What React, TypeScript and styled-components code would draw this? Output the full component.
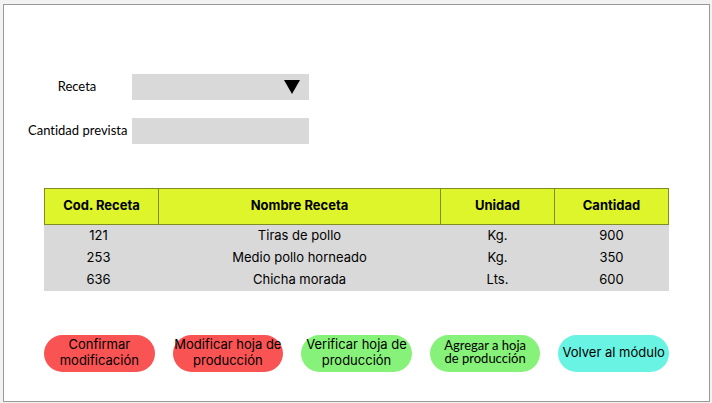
import React from 'react';
import styled, { createGlobalStyle } from 'styled-components';

const GlobalStyle = createGlobalStyle`
  * { box-sizing: border-box; }
  body {
    margin: 0;
    background: #f2f2f2;
    color: #000;
    font-family: Inter, "Liberation Sans", sans-serif;
    font-variant-ligatures: no-common-ligatures;
  }
`;

const Page = styled.div`
  display: flex;
  min-height: 100vh;
  padding: 4px 2px 1px 3px;
`;

const Panel = styled.main`
  flex: 1;
  min-width: 0;
  padding: 69px 40px 24px;
  background: #fff;
  border: 1px solid #999;
`;

const Form = styled.form`
  display: grid;
  grid-template-columns: 98px minmax(0, 177px);
  gap: 18px 6px;
  align-items: center;
  margin-left: -16px;
`;

const Label = styled.label`
  padding-bottom: 2px;
  font: 400 13px/24px Lato, sans-serif;
  font-variant-ligatures: no-common-ligatures;
  text-align: center;
  white-space: nowrap;
`;

const SelectBox = styled.div`
  display: grid;
  align-items: center;

  > * { grid-area: 1 / 1; }
`;

const Select = styled.select`
  appearance: none;
  width: 100%;
  height: 26px;
  padding: 0 32px 0 8px;
  border: 0;
  border-radius: 0;
  background: #d9d9d9;
  font: 400 13px/16px Inter, sans-serif;
`;

const Arrow = styled.svg`
  justify-self: end;
  width: 16px;
  height: 14px;
  margin-right: 9px;
  pointer-events: none;
`;

const Input = styled.input`
  width: 100%;
  height: 26px;
  padding: 0 8px;
  border: 0;
  background: #d9d9d9;
  font: 400 13px/16px Inter, sans-serif;
`;

const Table = styled.table`
  width: 100%;
  margin-top: 44px;
  table-layout: fixed;
  border-collapse: collapse;
  background: #d9d9d9;
`;

const HeadCell = styled.th<{ $wide?: boolean }>`
  width: ${({ $wide }) => ($wide ? 'auto' : '114px')};
  height: 36px;
  padding: 0 0 3px;
  border: 1px solid #7f8c1f;
  background: #ddf52a;
  font-size: 13px;
  line-height: 16px;
  font-weight: 700;
`;

const Cell = styled.td`
  height: 22px;
  padding: 0 0 2px;
  font-size: 13px;
  line-height: 20px;
  text-align: center;

  &:first-child { padding-right: 6px; }
`;

const Actions = styled.div`
  display: grid;
  grid-template-columns: repeat(5, minmax(0, 1fr));
  gap: 18px;
  margin-top: 44px;
`;

const tones = { red: '#f95353', green: '#87f279', cyan: '#69f3e2' };

const Action = styled.button<{ $tone: keyof typeof tones; $compact?: boolean }>`
  display: flex;
  align-items: center;
  justify-content: center;
  height: 37px;
  padding: 0 0 4px;
  border: 0;
  border-radius: 19px;
  background: ${({ $tone }) => tones[$tone]};
  color: #000;
  font-family: ${({ $compact }) => ($compact ? 'Lato' : 'Inter')}, sans-serif;
  font-size: 13px;
  line-height: ${({ $compact }) => ($compact ? '13px' : '16px')};
  text-align: center;
  white-space: nowrap;
`;

const recipes = [
  ['121', 'Tiras de pollo', 'Kg.', '900'],
  ['253', 'Medio pollo horneado', 'Kg.', '350'],
  ['636', 'Chicha morada', 'Lts.', '600'],
];

export default function App() {
  return (
    <Page>
      <GlobalStyle />
      <Panel>
        <Form>
          <Label htmlFor="receta">Receta</Label>
          <SelectBox>
            <Select id="receta" defaultValue="">
              <option value="" />
              {recipes.map(([code, name]) => (
                <option key={code} value={code}>{name}</option>
              ))}
            </Select>
            <Arrow viewBox="0 0 16 14" aria-hidden="true">
              <path d="M0 0H16L8 14Z" />
            </Arrow>
          </SelectBox>
          <Label htmlFor="cantidad">Cantidad prevista</Label>
          <Input id="cantidad" type="text" />
        </Form>
        <Table>
          <thead>
            <tr>
              <HeadCell scope="col">Cod. Receta</HeadCell>
              <HeadCell scope="col" $wide>Nombre Receta</HeadCell>
              <HeadCell scope="col">Unidad</HeadCell>
              <HeadCell scope="col">Cantidad</HeadCell>
            </tr>
          </thead>
          <tbody>
            {recipes.map((row) => (
              <tr key={row[0]}>
                {row.map((value, i) => (
                  <Cell key={i}>{value}</Cell>
                ))}
              </tr>
            ))}
          </tbody>
        </Table>
        <Actions>
          <Action type="button" $tone="red">Confirmar<br />modificación</Action>
          <Action type="button" $tone="red">Modificar hoja de<br />producción</Action>
          <Action type="button" $tone="green">Verificar hoja de<br />producción</Action>
          <Action type="button" $tone="green" $compact>Agregar a hoja<br />de producción</Action>
          <Action type="button" $tone="cyan">Volver al módulo</Action>
        </Actions>
      </Panel>
    </Page>
  );
}
